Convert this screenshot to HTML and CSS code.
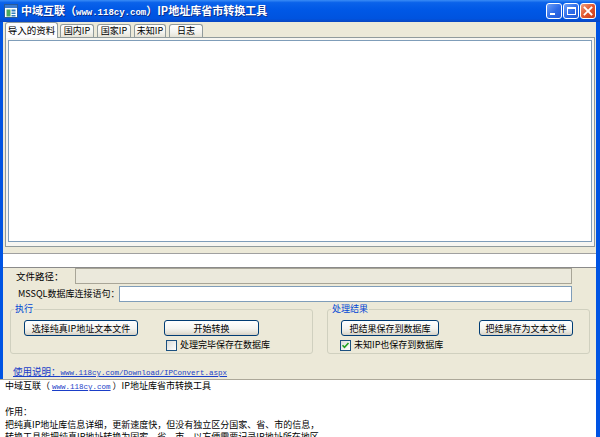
FILE: index.html
```html
<!DOCTYPE html>
<html lang="zh-CN">
<head>
    <meta charset="UTF-8">
    <title>IP地址库省市转换工具</title>
    <link rel="stylesheet" href="styles.css">
</head>
<body>
    <div class="window">
        <!-- Title bar -->
        <div class="titlebar">
            <svg class="app-icon" width="14" height="14" viewBox="0 0 14 14">
                <rect x="0.5" y="0.5" width="13" height="13" fill="#ffffff" stroke="#2a5a9a"/>
                <rect x="1" y="1" width="12" height="3" fill="#3b7bd0"/>
                <rect x="2.5" y="5.5" width="4" height="7" fill="#4aa860"/>
                <rect x="7.5" y="5.5" width="4" height="2" fill="#2f7fbf"/>
                <rect x="7.5" y="8.5" width="4" height="1.5" fill="#2f7fbf"/>
                <rect x="7.5" y="11" width="4" height="1.5" fill="#2f7fbf"/>
            </svg>
            <span class="title">中域互联（<span class="title-url">www.118cy.com</span>）IP地址库省市转换工具</span>
            <div class="caption-buttons">
                <span class="cap cap-min"><span class="min-bar"></span></span>
                <span class="cap cap-max"><span class="max-box"></span></span>
                <span class="cap cap-close">
                    <svg width="10" height="10" viewBox="0 0 10 10">
                        <path d="M1.5 1.5 L8.5 8.5 M8.5 1.5 L1.5 8.5" stroke="#ffffff" stroke-width="1.8" stroke-linecap="square"/>
                    </svg>
                </span>
            </div>
        </div>

        <div class="frame">
            <div class="client">
                <!-- Tabs -->
                <div class="tabs">
                    <div class="tab tab-active">导入的资料</div>
                    <div class="tab tab-w34">国内IP</div>
                    <div class="tab tab-w34">国家IP</div>
                    <div class="tab tab-w32">未知IP</div>
                    <div class="tab tab-w34">日志</div>
                </div>
                <div class="tab-panel">
                    <div class="list-box"></div>
                </div>

                <div class="split-strip"></div>

                <!-- Settings -->
                <div class="field-row field-path">
                    <label class="field-label">文件路径：</label>
                    <div class="input input-disabled"></div>
                </div>
                <div class="field-row field-conn">
                    <label class="field-label">MSSQL数据库连接语句：</label>
                    <div class="input"></div>
                </div>

                <!-- Group boxes -->
                <div class="groups">
                    <fieldset class="group group-exec">
                        <legend>执行</legend>
                        <div class="group-grid grid-exec">
                            <button class="btn">选择纯真IP地址文本文件</button>
                            <button class="btn">开始转换</button>
                            <span></span>
                            <div class="check check-exec">
                                <span class="check-box"></span>
                                <span>处理完毕保存在数据库</span>
                            </div>
                        </div>
                    </fieldset>
                    <fieldset class="group group-result">
                        <legend>处理结果</legend>
                        <div class="group-grid grid-result">
                            <button class="btn">把结果保存到数据库</button>
                            <button class="btn">把结果存为文本文件</button>
                            <div class="check check-result">
                                <span class="check-box checked">
                                    <svg width="9" height="9" viewBox="0 0 9 9">
                                        <path d="M1.5 4.2 L3.5 6.3 L7.5 2" fill="none" stroke="#21a121" stroke-width="1.6"/>
                                    </svg>
                                </span>
                                <span>未知IP也保存到数据库</span>
                            </div>
                        </div>
                    </fieldset>
                </div>

                <div class="help-link">
                    <a href="#">使用说明：<span class="mono">www.118cy.com/Download/IPConvert.aspx</span></a>
                </div>

                <!-- Description -->
                <div class="notes">
                    <p>中域互联（ <a href="#" class="mono">www.118cy.com</a> ）IP地址库省市转换工具</p>
                    <p>&nbsp;</p>
                    <p>作用：</p>
                    <p>把纯真IP地址库信息详细，更新速度快，但没有独立区分国家、省、市的信息，</p>
                    <p>转换工具能把纯真IP地址转换为国家、省、市，以方便需要记录IP地址所在地区。</p>
                </div>
            </div>
        </div>
    </div>
</body>
</html>
```

FILE: styles.css
```css
* {
    margin: 0;
    padding: 0;
    box-sizing: border-box;
}

body {
    width: 600px;
    height: 437px;
    overflow: hidden;
    font-family: "Noto Sans CJK SC", sans-serif;
    font-size: 9px;
    color: #000000;
    background: #ffffff;
}

.mono {
    font-family: "Liberation Mono", "Noto Sans CJK SC", monospace;
    font-size: 7.5px;
}

.window {
    width: 600px;
    height: 437px;
    display: flex;
    flex-direction: column;
    overflow: hidden;
}

/* Title bar */
.titlebar {
    height: 22px;
    flex: none;
    display: flex;
    align-items: center;
    padding: 0 4px 0 4px;
    background: linear-gradient(#3a8cf6 0%, #0a62ea 12%, #0058e6 45%, #0053df 85%, #0a46c0 100%);
}

.app-icon {
    flex: none;
    margin-right: 3px;
}

.title {
    color: #ffffff;
    font-weight: bold;
    font-size: 11px;
    line-height: 14px;
    text-shadow: 1px 1px 0 #0b2f8a;
    white-space: nowrap;
}

.title-url {
    font-family: "Liberation Mono", monospace;
    font-size: 9px;
}

.caption-buttons {
    margin-left: auto;
    display: flex;
    gap: 1px;
}

.cap {
    width: 16px;
    height: 16px;
    border: 1px solid #ffffff;
    border-radius: 3px;
    display: flex;
    align-items: center;
    justify-content: center;
    background: linear-gradient(135deg, #6d9ff7 0%, #2c6ae8 55%, #2358d6 100%);
}

.cap-close {
    background: linear-gradient(135deg, #f0a07e 0%, #e2572f 50%, #c63c1c 100%);
}

.min-bar {
    width: 5px;
    height: 2px;
    background: #ffffff;
    align-self: flex-end;
    margin: 0 4px 3px 0;
}

.max-box {
    width: 9px;
    height: 8px;
    border: 1px solid #ffffff;
    border-top-width: 2px;
}

/* Window frame */
.frame {
    flex: 1;
    display: flex;
    background: #0054e3;
    padding: 0 4px 0 3px;
    min-height: 0;
}

.client {
    flex: 1;
    display: flex;
    flex-direction: column;
    background: #ece9d8;
    min-height: 0;
}

/* Tabs */
.tabs {
    height: 15px;
    flex: none;
    display: flex;
    align-items: flex-end;
    padding-left: 2px;
    position: relative;
    z-index: 1;
}

.tab {
    height: 13px;
    margin-left: 3px;
    border: 1px solid #919b9c;
    border-bottom: none;
    border-radius: 3px 3px 0 0;
    background: linear-gradient(#ffffff, #f3f3ef 60%, #e6e3d6);
    text-align: center;
    line-height: 12px;
    white-space: nowrap;
}

.tab-active {
    width: 53px;
    height: 16px;
    margin-left: 0;
    margin-bottom: -1px;
    background: #fcfcfe;
    line-height: 14px;
    font-size: 9.5px;
}

.tab-active + .tab {
    margin-left: 2px;
}

.tab-w34 {
    width: 34px;
}

.tab-w32 {
    width: 32px;
}

.tab-panel {
    height: 210px;
    flex: none;
    margin: 0 1px 0 2px;
    border: 1px solid #919b9c;
    background: #f7f6f1;
    padding: 2px;
}

.list-box {
    height: 202px;
    background: #ffffff;
    border: 1px solid #7f9db9;
}

.split-strip {
    height: 15px;
    flex: none;
    margin-top: 6px;
    background: #ffffff;
    border-top: 1px solid #a0a0a0;
    border-bottom: 1px solid #8a8a8a;
}

/* Fields */
.field-row {
    height: 16px;
    flex: none;
    display: flex;
    align-items: center;
}

.field-label {
    white-space: nowrap;
    line-height: 12px;
}

.field-path .field-label {
    width: 72px;
    padding-left: 13px;
    font-size: 9.5px;
}

.field-conn {
    margin-top: 2px;
}

.field-conn .field-label {
    width: 116px;
    padding-left: 15px;
}

.input {
    height: 16px;
    background: #ffffff;
    border: 1px solid #7f9db9;
}

.field-path .input {
    width: 497px;
}

.field-conn .input {
    width: 453px;
}

.input-disabled {
    background: #ebe9dc;
    border-color: #a8a597;
}

/* Group boxes */
.groups {
    flex: none;
    display: flex;
    margin-top: 1px;
}

.group {
    border: 1px solid #d0d0bf;
    border-radius: 3px;
    height: 51px;
    padding: 0 0 2px 0;
}

.group legend {
    color: #0046d5;
    font-size: 9px;
    line-height: 12px;
    padding: 0 1px;
    margin-left: 3px;
}

.group-exec {
    width: 303px;
    margin-left: 7px;
}

.group-result {
    width: 263px;
    margin-left: 14px;
}

.group-grid {
    display: grid;
    row-gap: 3px;
    margin-top: 5px;
    margin-left: 13px;
}

.grid-exec {
    grid-template-columns: 114px 95px;
    column-gap: 26px;
}

.grid-result {
    grid-template-columns: 98px 94px;
    column-gap: 40px;
}

.btn {
    height: 16px;
    font-family: inherit;
    font-size: 9px;
    line-height: 13px;
    color: #000000;
    border: 1px solid #003c74;
    border-radius: 3px;
    background: linear-gradient(#ffffff 0%, #f4f4f0 55%, #e3e0d6 85%, #d6d0c5 100%);
    white-space: nowrap;
}

.check {
    display: flex;
    align-items: center;
    gap: 3px;
    height: 12px;
    line-height: 12px;
    white-space: nowrap;
}

.check-exec {
    margin-left: 2px;
}

.check-result {
    margin-left: -1px;
}

.check-box {
    flex: none;
    width: 11px;
    height: 11px;
    border: 1px solid #1c5180;
    background: linear-gradient(135deg, #dcdcd7, #ffffff);
    display: flex;
    align-items: center;
    justify-content: center;
}

/* Help link */
.help-link {
    flex: none;
    height: 13px;
    margin-top: 11px;
    padding-left: 10px;
    line-height: 13px;
    font-size: 9.5px;
}

.help-link a,
.notes a {
    color: #1a3ec8;
    text-decoration: underline;
}

.notes {
    flex: 1;
    margin-left: -3px;
    margin-top: 1px;
    background: #ffffff;
    border-top: 1px solid #aca899;
    padding: 0 0 0 5px;
    line-height: 12.5px;
    white-space: nowrap;
}
```
